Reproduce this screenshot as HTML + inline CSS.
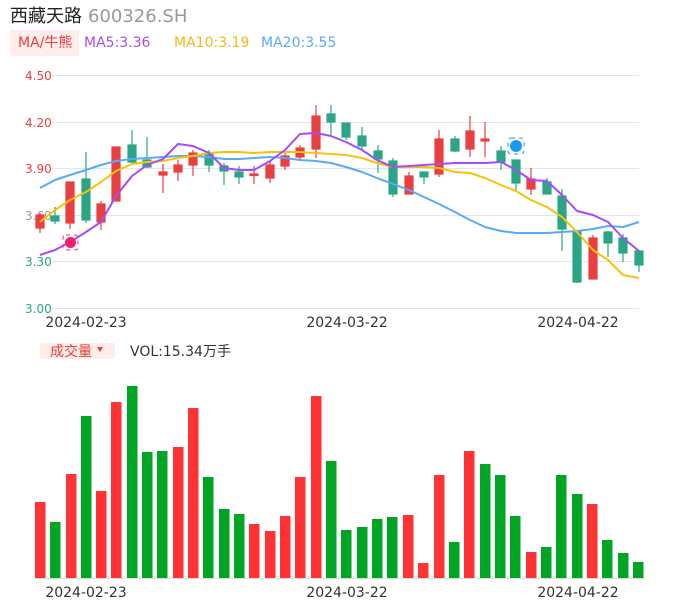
<!DOCTYPE html>
<html><head><meta charset="utf-8"><style>
body{margin:0;background:#fff;width:686px;height:606px;overflow:hidden;font-family:"DejaVu Sans","Noto Sans CJK SC",sans-serif}
svg{position:absolute;left:0;top:0}
</style></head><body>
<svg width="686" height="606" xmlns="http://www.w3.org/2000/svg" font-family="'DejaVu Sans','Noto Sans CJK SC',sans-serif">
<text x="10" y="22" font-size="18" fill="#222" font-family="'Noto Sans CJK SC',sans-serif">西藏天路</text>
<text x="88" y="22" font-size="18" fill="#999">600326.SH</text>
<rect x="10" y="30" width="69" height="26" fill="#fdeee9"/>
<text x="18" y="47" font-size="14" fill="#f03c3c">MA/<tspan font-family="'Noto Sans CJK SC',sans-serif">牛熊</tspan></text>
<text x="84" y="47" font-size="14" fill="#a64cf5">MA5:3.36</text>
<text x="174" y="47" font-size="14" fill="#f8b519">MA10:3.19</text>
<text x="261" y="47" font-size="14" fill="#5aabf5">MA20:3.55</text>
<g stroke="#e1e5f0" stroke-width="1">
<line x1="52" y1="75.5" x2="639" y2="75.5"/><line x1="52" y1="122.5" x2="639" y2="122.5"/><line x1="52" y1="168.5" x2="639" y2="168.5"/><line x1="52" y1="215.5" x2="639" y2="215.5"/><line x1="52" y1="261.5" x2="639" y2="261.5"/><line x1="52" y1="308.5" x2="639" y2="308.5"/>
</g>
<g font-size="12">
<text x="25" y="80" fill="#f03c3c">4.50</text><text x="25" y="127" fill="#f03c3c">4.20</text><text x="25" y="173" fill="#f03c3c">3.90</text><text x="25" y="220" fill="#999">3.60</text><text x="25" y="266" fill="#2aa585">3.30</text><text x="25" y="313" fill="#2aa585">3.00</text>
</g>
<g font-size="14" fill="#333" text-anchor="middle">
<text x="86" y="327">2024-02-23</text><text x="347" y="327">2024-03-22</text><text x="578" y="327">2024-04-22</text>
<text x="86" y="597">2024-02-23</text><text x="347" y="597">2024-03-22</text><text x="578" y="597">2024-04-22</text>
</g>
<g stroke-width="1.2">
<g stroke="#e84040" fill="#e84040">
<line x1="40" y1="213" x2="40" y2="233"/><rect x="36" y="215" width="8" height="13"/>
<line x1="70" y1="182" x2="70" y2="229"/><rect x="66" y="182" width="8" height="41"/>
<line x1="101" y1="201" x2="101" y2="230"/><rect x="97" y="204" width="8" height="18"/>
<line x1="116" y1="147" x2="116" y2="201"/><rect x="112" y="147" width="8" height="54"/>
<line x1="163" y1="164" x2="163" y2="193"/><rect x="159" y="172" width="8" height="3"/>
<line x1="178" y1="160" x2="178" y2="181"/><rect x="174" y="165" width="8" height="7"/>
<line x1="193" y1="150" x2="193" y2="176"/><rect x="189" y="153" width="8" height="12"/>
<line x1="254" y1="166" x2="254" y2="184"/><rect x="250" y="174" width="8" height="1.5"/>
<line x1="270" y1="160" x2="270" y2="183"/><rect x="266" y="165" width="8" height="13"/>
<line x1="285" y1="150" x2="285" y2="170"/><rect x="281" y="156" width="8" height="10"/>
<line x1="300" y1="145" x2="300" y2="161"/><rect x="296" y="148" width="8" height="9"/>
<line x1="316" y1="105" x2="316" y2="158"/><rect x="312" y="116" width="8" height="33"/>
<line x1="409" y1="172" x2="409" y2="194"/><rect x="405" y="176" width="8" height="18"/>
<line x1="439" y1="130" x2="439" y2="177"/><rect x="435" y="139" width="8" height="35"/>
<line x1="470" y1="116" x2="470" y2="157"/><rect x="466" y="131" width="8" height="18"/>
<line x1="485" y1="122" x2="485" y2="157"/><rect x="481" y="139" width="8" height="2"/>
<line x1="531" y1="168" x2="531" y2="195"/><rect x="527" y="179" width="8" height="10"/>
<line x1="593" y1="235" x2="593" y2="279"/><rect x="589" y="238" width="8" height="41"/>
</g>
<g stroke="#2aa585" fill="#2aa585">
<line x1="55" y1="207" x2="55" y2="224"/><rect x="51" y="216" width="8" height="5"/>
<line x1="86" y1="152" x2="86" y2="223"/><rect x="82" y="179" width="8" height="41"/>
<line x1="132" y1="130" x2="132" y2="165"/><rect x="128" y="145" width="8" height="17"/>
<line x1="147" y1="137" x2="147" y2="168"/><rect x="143" y="160" width="8" height="7"/>
<line x1="209" y1="150" x2="209" y2="172"/><rect x="205" y="154" width="8" height="11"/>
<line x1="224" y1="163" x2="224" y2="185"/><rect x="220" y="166" width="8" height="5"/>
<line x1="239" y1="166" x2="239" y2="184"/><rect x="235" y="172" width="8" height="5"/>
<line x1="331" y1="105" x2="331" y2="135"/><rect x="327" y="114" width="8" height="8"/>
<line x1="346" y1="123" x2="346" y2="140"/><rect x="342" y="123" width="8" height="14"/>
<line x1="362" y1="127" x2="362" y2="150"/><rect x="358" y="136" width="8" height="10"/>
<line x1="378" y1="145" x2="378" y2="173"/><rect x="374" y="151" width="8" height="8"/>
<line x1="393" y1="158" x2="393" y2="197"/><rect x="389" y="161" width="8" height="33"/>
<line x1="424" y1="172" x2="424" y2="184"/><rect x="420" y="172" width="8" height="5"/>
<line x1="455" y1="136" x2="455" y2="152"/><rect x="451" y="139" width="8" height="12"/>
<line x1="501" y1="146" x2="501" y2="170"/><rect x="497" y="151" width="8" height="11"/>
<line x1="516" y1="160" x2="516" y2="190"/><rect x="512" y="160" width="8" height="23"/>
<line x1="547" y1="178" x2="547" y2="194"/><rect x="543" y="182" width="8" height="12"/>
<line x1="562" y1="189" x2="562" y2="251"/><rect x="558" y="196" width="8" height="33"/>
<line x1="577" y1="232" x2="577" y2="283"/><rect x="573" y="232" width="8" height="50"/>
<line x1="608" y1="231" x2="608" y2="257"/><rect x="604" y="232" width="8" height="11"/>
<line x1="623" y1="234" x2="623" y2="262"/><rect x="619" y="238" width="8" height="15"/>
<line x1="639" y1="251" x2="639" y2="272"/><rect x="635" y="251" width="8" height="14"/>
</g>
</g>
<g fill="none" stroke-width="2" stroke-linejoin="round">
<polyline stroke="#5aabf5" points="40,188 55,180 70,175 86,170 101,165 116,161 132,159 147,158 163,157 178,156 193,156 209,157 224,159 239,159 254,158 270,157 285,158 300,160 316,161 331,163 346,167 362,172 377,178 393,184 409,190 424,197 439,204 455,212 470,220 485,227 501,231 516,233 531,233 547,233 562,232 577,231 593,229 608,226 623,227 639,222"/>
<polyline stroke="#f8c20a" points="40,222 55,210 70,200 86,192 101,182 116,171 132,164 147,162 163,161 178,158 193,156 209,153 224,152 239,152 254,153 270,152 285,152 300,152 316,153 331,154 346,155 362,158 377,163 393,167 409,167 424,167 439,168 455,172 470,173 485,178 501,185 516,191 531,200 547,207 562,217 577,232 593,250 608,260 623,275 639,278"/>
<polyline stroke="#a64cf5" points="40,255 55,250 70,242 86,232 101,222 116,196 132,176 147,165 163,159 178,144 193,146 209,153 224,168 239,170 254,170 270,161 285,150 300,134 316,133 331,136 346,142 362,150 377,160 393,167 409,166 424,165 439,164 455,163 470,163 485,163 501,162 516,170 531,180 547,181 562,195 577,211 593,215 608,222 623,238 639,251"/>
</g>
<rect x="63" y="235" width="15" height="15" rx="3" fill="none" stroke="#ff3070" stroke-dasharray="4 4"/>
<circle cx="70.5" cy="242.5" r="5.5" fill="#f0206a"/>
<rect x="508" y="138" width="16" height="16" rx="3" fill="none" stroke="#1a9af5" stroke-dasharray="4 4"/>
<circle cx="516" cy="146" r="6" fill="#1a9af5"/>
<rect x="40" y="343" width="75" height="16" fill="#fdeee9"/>
<text x="50" y="356" font-size="14" fill="#f03c3c" font-family="'Noto Sans CJK SC',sans-serif">成交量</text>
<path d="M97 347 L103 347 L100 352 Z" fill="#f03c3c"/>
<text x="130" y="356" font-size="14" fill="#333">VOL:15.34<tspan font-family="'Noto Sans CJK SC',sans-serif">万手</tspan></text>
<g>
<g fill="#ff3333">
<rect x="35" y="502" width="10.5" height="76"/><rect x="66" y="474" width="10.5" height="104"/><rect x="96" y="491" width="10.5" height="87"/><rect x="111" y="402" width="10.5" height="176"/><rect x="173" y="447" width="10.5" height="131"/><rect x="188" y="408" width="10.5" height="170"/><rect x="249" y="524" width="10.5" height="54"/><rect x="265" y="531" width="10.5" height="47"/><rect x="280" y="516" width="10.5" height="62"/><rect x="295" y="477" width="10.5" height="101"/><rect x="311" y="396" width="10.5" height="182"/><rect x="403" y="515" width="10.5" height="63"/><rect x="418" y="563" width="10.5" height="15"/><rect x="434" y="475" width="10.5" height="103"/><rect x="464" y="451" width="10.5" height="127"/><rect x="526" y="552" width="10.5" height="26"/><rect x="587" y="504" width="10.5" height="74"/>
</g>
<g fill="#00a524">
<rect x="50" y="522" width="10.5" height="56"/><rect x="81" y="416" width="10.5" height="162"/><rect x="127" y="386" width="10.5" height="192"/><rect x="142" y="452" width="10.5" height="126"/><rect x="157" y="451" width="10.5" height="127"/><rect x="203" y="477" width="10.5" height="101"/><rect x="219" y="509" width="10.5" height="69"/><rect x="234" y="514" width="10.5" height="64"/><rect x="326" y="461" width="10.5" height="117"/><rect x="341" y="530" width="10.5" height="48"/><rect x="357" y="527" width="10.5" height="51"/><rect x="372" y="519" width="10.5" height="59"/><rect x="387" y="517" width="10.5" height="61"/><rect x="449" y="542" width="10.5" height="36"/><rect x="480" y="464" width="10.5" height="114"/><rect x="495" y="475" width="10.5" height="103"/><rect x="510" y="516" width="10.5" height="62"/><rect x="541" y="547" width="10.5" height="31"/><rect x="556" y="475" width="10.5" height="103"/><rect x="572" y="494" width="10.5" height="84"/><rect x="602" y="540" width="10.5" height="38"/><rect x="618" y="553" width="10.5" height="25"/><rect x="633" y="562" width="10.5" height="16"/>
</g>
</g>
<line x1="34" y1="578.5" x2="645" y2="578.5" stroke="#ddd"/>
</svg>
</body></html>
